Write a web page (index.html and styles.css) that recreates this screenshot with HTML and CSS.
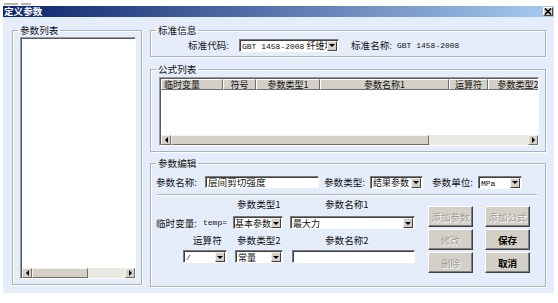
FILE: index.html
```html
<!DOCTYPE html>
<html lang="zh-CN">

<head>
    <meta charset="UTF-8">
    <meta name="viewport" content="width=device-width, initial-scale=1.0">
    <title>定义参数</title>
    <link rel="stylesheet" href="styles.css">
</head>

<body>
    <div class="top-strip"><span class="ghost g1"></span><span class="ghost g2"></span></div>
    <div class="window">
        <div class="titlebar">
            <span class="title">定义参数</span>
            <span class="close-btn">
                <svg width="8" height="7" viewBox="0 0 8 7"><path d="M1 0.5L7 6.5M7 0.5L1 6.5" stroke="#000" stroke-width="1.6" /></svg>
            </span>
        </div>
        <div class="client">
            <!-- 参数列表 -->
            <fieldset class="group group-list">
                <legend>参数列表</legend>
                <div class="listbox">
                    <div class="list-area"></div>
                    <div class="hscroll">
                        <span class="sb-btn"><i class="arrow-left"></i></span>
                        <span class="sb-thumb list-thumb"></span>
                        <span class="sb-track"></span>
                        <span class="sb-btn"><i class="arrow-right"></i></span>
                    </div>
                </div>
            </fieldset>

            <div class="right-col">
                <!-- 标准信息 -->
                <fieldset class="group group-std">
                    <legend>标准信息</legend>
                    <div class="std-row">
                        <span class="lbl">标准代码:</span>
                        <div class="combo combo-code">
                            <span class="val"><span class="latin">GBT 1458-2008</span> 纤维增</span>
                            <span class="drop"><i class="arrow-down"></i></span>
                        </div>
                        <span class="lbl std-name">标准名称:</span>
                        <span class="latin">GBT 1458-2008</span>
                    </div>
                </fieldset>

                <!-- 公式列表 -->
                <fieldset class="group group-formula">
                    <legend>公式列表</legend>
                    <div class="listview">
                        <div class="lv-header">
                            <span class="col c1 left">临时变量</span>
                            <span class="col c2">符号</span>
                            <span class="col c3">参数类型1</span>
                            <span class="col c4">参数名称1</span>
                            <span class="col c5">运算符</span>
                            <span class="col c6">参数类型2</span>
                        </div>
                        <div class="lv-body"></div>
                        <div class="hscroll">
                            <span class="sb-btn"><i class="arrow-left"></i></span>
                            <span class="sb-thumb lv-thumb"></span>
                            <span class="sb-track"></span>
                            <span class="sb-btn"><i class="arrow-right"></i></span>
                        </div>
                    </div>
                </fieldset>

                <!-- 参数编辑 -->
                <fieldset class="group group-edit">
                    <legend>参数编辑</legend>
                    <div class="edit-row">
                        <span class="lbl w-name">参数名称:</span>
                        <div class="textbox tb-name">层间剪切强度</div>
                        <span class="lbl w-type">参数类型:</span>
                        <div class="combo combo-type">
                            <span class="val">结果参数</span>
                            <span class="drop"><i class="arrow-down"></i></span>
                        </div>
                        <span class="lbl w-unit">参数单位:</span>
                        <div class="combo combo-unit">
                            <span class="val"><span class="latin">MPa</span></span>
                            <span class="drop"><i class="arrow-down"></i></span>
                        </div>
                    </div>
                    <div class="separator"></div>
                    <div class="edit-lower">
                        <div class="formula-fields">
                            <div class="f-row f-caption">
                                <span class="sp-a"></span>
                                <span class="cap-type">参数类型1</span>
                                <span class="cap-name1">参数名称1</span>
                            </div>
                            <div class="f-row f-inputs">
                                <span class="lbl w-temp">临时变量:</span>
                                <span class="temp-eq latin">temp=</span>
                                <div class="combo combo-t1">
                                    <span class="val">基本参数</span>
                                    <span class="drop"><i class="arrow-down"></i></span>
                                </div>
                                <div class="combo combo-n1">
                                    <span class="val">最大力</span>
                                    <span class="drop"><i class="arrow-down"></i></span>
                                </div>
                            </div>
                            <div class="f-row f-caption f-caption2">
                                <span class="sp-c"></span>
                                <span class="cap-op">运算符</span>
                                <span class="cap-type">参数类型2</span>
                                <span class="cap-name2">参数名称2</span>
                            </div>
                            <div class="f-row f-inputs f-inputs2">
                                <span class="sp-d"></span>
                                <div class="combo combo-op">
                                    <span class="val"><span class="latin">/</span></span>
                                    <span class="drop"><i class="arrow-down"></i></span>
                                </div>
                                <div class="combo combo-t2">
                                    <span class="val">常量</span>
                                    <span class="drop"><i class="arrow-down"></i></span>
                                </div>
                                <div class="textbox tb-name2"></div>
                            </div>
                        </div>
                        <div class="buttons">
                            <div class="btn disabled">添加参数</div>
                            <div class="btn disabled">添加公式</div>
                            <div class="btn disabled">修改</div>
                            <div class="btn">保存</div>
                            <div class="btn disabled">删除</div>
                            <div class="btn">取消</div>
                        </div>
                    </div>
                </fieldset>
            </div>
        </div>
    </div>
</body>

</html>
```

FILE: styles.css
```css
body {
    margin: 0;
    background: #ffffff;
    font-family: "Noto Sans CJK SC", "Liberation Sans", sans-serif;
    font-size: 9.6px;
    color: #111;
    width: 558px;
    height: 303px;
    overflow: hidden;
}

.latin {
    font-family: "Liberation Mono", monospace;
    font-size: 8px;
}

.top-strip {
    height: 6px;
    display: flex;
    gap: 3px;
    padding-left: 4px;
}

.ghost {
    height: 2px;
    margin-top: 3px;
    background: #b4b4b4;
}

.g1 { width: 14px; }
.g2 { width: 10px; }

.window {
    margin-left: 3px;
    width: 551px;
    height: 287px;
    background: #e5edfb;
}

/* title bar */
.titlebar {
    height: 11px;
    display: flex;
    align-items: center;
    justify-content: space-between;
    background: linear-gradient(to right, #0a246a, #a6caf0);
    padding: 0 1px 0 1px;
}

.titlebar .title {
    color: #fff;
    font-weight: 700;
    font-size: 9.6px;
    line-height: 11px;
}

.close-btn {
    width: 10px;
    height: 9px;
    box-sizing: border-box;
    background: #d4d0c8;
    border: 1px solid;
    border-color: #fff #404040 #404040 #fff;
    display: flex;
    align-items: center;
    justify-content: center;
}

.client {
    display: flex;
    padding: 7px 8px 0 9px;
    gap: 8px;
}

/* group boxes */
.group {
    margin: 0;
    min-width: 0;
    box-sizing: border-box;
    border: 1px solid #a9b3c0;
    box-shadow: inset 1px 1px 0 #ffffff, 1px 1px 0 #ffffff;
    border-radius: 0;
}

.group legend {
    padding: 0 2px;
    line-height: 12px;
    font-size: 9.6px;
}

.group-list {
    width: 130px;
    height: 261px;
    padding: 1px 5px 5px 7px;
}

.group-list legend {
    margin-left: -2px;
}

.right-col {
    width: 396px;
    display: flex;
    flex-direction: column;
}

.group-std {
    height: 33px;
    padding: 0 5px 0 37px;
}

.group-std legend {
    margin-left: -32px;
}

.group-formula {
    margin-top: 6px;
    height: 89px;
    padding: 2px 6px 5px 8px;
}

.group-formula legend {
    margin-left: -3px;
}

.group-edit {
    margin-top: 5px;
    height: 130px;
    padding: 0 8px 0 4px;
}

.group-edit legend {
    margin-left: 1px;
}

/* list box */
.listbox {
    height: 242px;
    box-sizing: border-box;
    background: #fff;
    border: 1px solid;
    border-color: #9a9a9a #ffffff #ffffff #9a9a9a;
    box-shadow: inset 1px 1px 0 #5a5a5a;
    display: flex;
    flex-direction: column;
    padding: 1px 0 0 1px;
}

.list-area {
    flex: 1;
}

.hscroll {
    height: 10px;
    display: flex;
    background: #ebe9e4;
}

.sb-btn {
    width: 10px;
    height: 10px;
    box-sizing: border-box;
    background: #d4d0c8;
    border: 1px solid;
    border-color: #f4f3ef #6f6d68 #6f6d68 #f4f3ef;
    display: flex;
    align-items: center;
    justify-content: center;
    flex: none;
}

.sb-thumb {
    height: 10px;
    box-sizing: border-box;
    background: #d4d0c8;
    border: 1px solid;
    border-color: #f4f3ef #6f6d68 #6f6d68 #f4f3ef;
    flex: none;
}

.sb-track {
    flex: 1;
}

.list-thumb {
    width: 56px;
}

.lv-thumb {
    width: 258px;
}

.arrow-left,
.arrow-right,
.arrow-down {
    display: block;
    width: 0;
    height: 0;
}

.arrow-left {
    border-top: 3px solid transparent;
    border-bottom: 3px solid transparent;
    border-right: 3px solid #000;
}

.arrow-right {
    border-top: 3px solid transparent;
    border-bottom: 3px solid transparent;
    border-left: 3px solid #000;
}

.arrow-down {
    border-left: 3px solid transparent;
    border-right: 3px solid transparent;
    border-top: 3px solid #000;
}

/* standard info */
.std-row {
    display: flex;
    align-items: center;
    height: 16px;
    margin-top: 1px;
}

.lbl {
    white-space: nowrap;
}

.std-row .lbl:first-child {
    width: 51px;
}

.std-name {
    margin-left: 12px;
    width: 46px;
}

/* combo boxes */
.combo {
    height: 13px;
    box-sizing: border-box;
    background: #fff;
    border: 1px solid;
    border-color: #7a7a7a #ffffff #ffffff #7a7a7a;
    box-shadow: inset 1px 1px 0 #404040;
    display: flex;
    align-items: center;
    padding: 1px 1px 0 2px;
    flex: none;
}

.combo .val {
    flex: 1;
    overflow: hidden;
    white-space: nowrap;
    line-height: 11px;
    font-size: 9px;
}

.combo .drop {
    width: 10px;
    height: 10px;
    box-sizing: border-box;
    background: #d4d0c8;
    border: 1px solid;
    border-color: #f4f3ef #404040 #404040 #f4f3ef;
    display: flex;
    align-items: center;
    justify-content: center;
    flex: none;
}

.combo-code {
    width: 100px;
}

.combo-type {
    width: 53px;
}

.combo-unit {
    width: 44px;
}

.combo-t1 {
    width: 50px;
    padding-left: 1px;
}

.combo-n1 {
    width: 125px;
    margin-left: 7px;
}

.combo-op {
    width: 44px;
}

.combo-t2 {
    width: 48px;
    margin-left: 8px;
}

/* text boxes */
.textbox {
    height: 12px;
    box-sizing: border-box;
    background: #fff;
    border: 1px solid;
    border-color: #7a7a7a #ffffff #ffffff #7a7a7a;
    box-shadow: inset 1px 1px 0 #404040;
    padding: 0 2px;
    line-height: 11px;
    white-space: nowrap;
}

.tb-name {
    width: 114px;
}

.tb-name2 {
    width: 123px;
    height: 13px;
    margin-left: 9px;
}

/* list view */
.listview {
    height: 69px;
    box-sizing: border-box;
    background: #fff;
    border: 1px solid;
    border-color: #9a9a9a #ffffff #ffffff #9a9a9a;
    box-shadow: inset 1px 1px 0 #5a5a5a;
    padding: 1px 0 0 1px;
    display: flex;
    flex-direction: column;
    overflow: hidden;
}

.lv-header {
    display: flex;
    height: 11px;
    flex: none;
    font-size: 9px;
}

.lv-header .col {
    box-sizing: border-box;
    height: 11px;
    background: #d4d0c8;
    border: 1px solid;
    border-color: #ffffff #6f6d68 #6f6d68 #ffffff;
    line-height: 9px;
    text-align: center;
    white-space: nowrap;
    flex: none;
}

.lv-header .col.left {
    text-align: left;
    padding-left: 2px;
}

.c1 { width: 62px; }
.c2 { width: 33px; }
.c3 { width: 64px; }
.c4 { width: 129px; }
.c5 { width: 39px; }
.c6 { width: 60px; }

.lv-body {
    flex: 1;
}

/* parameter edit */
.edit-row {
    display: flex;
    align-items: center;
    height: 12px;
    margin-top: 7px;
}

.w-name {
    width: 49px;
    padding-left: 1px;
}

.w-type {
    width: 46px;
    margin-left: 5px;
}

.w-unit {
    width: 46px;
    margin-left: 9px;
}

.separator {
    margin: 6px 0 0 2px;
    height: 0;
    border-top: 1px solid #a9b3c0;
    border-bottom: 1px solid #ffffff;
}

.edit-lower {
    display: flex;
}

.formula-fields {
    width: 272px;
    padding-left: 1px;
}

.f-row {
    display: flex;
    align-items: center;
}

.f-caption {
    height: 12px;
    margin-top: 2px;
}

.f-inputs {
    height: 13px;
    margin-top: 6px;
}

.f-caption2 {
    margin-top: 5px;
}

.f-inputs2 {
    margin-top: 4px;
}

.sp-a { width: 81px; }
.sp-c { width: 37px; }
.sp-d { width: 27px; }

.cap-type {
    width: 88px;
}

.cap-op {
    width: 44px;
}

.w-temp {
    width: 47px;
}

.temp-eq {
    width: 30px;
}

/* buttons */
.buttons {
    margin-left: 0;
    margin-top: 10px;
    display: grid;
    grid-template-columns: 45px 45px;
    grid-auto-rows: 21px;
    column-gap: 12px;
    row-gap: 2px;
}

.btn {
    box-sizing: border-box;
    background: #d4d0c8;
    border: 1px solid;
    border-color: #ffffff #404040 #404040 #ffffff;
    box-shadow: inset -1px -1px 0 #808080;
    display: flex;
    align-items: center;
    justify-content: center;
    font-weight: 700;
    color: #000;
}

.btn.disabled {
    font-weight: 400;
    color: #a09d98;
    text-shadow: 1px 1px 0 #ffffff;
}
```
